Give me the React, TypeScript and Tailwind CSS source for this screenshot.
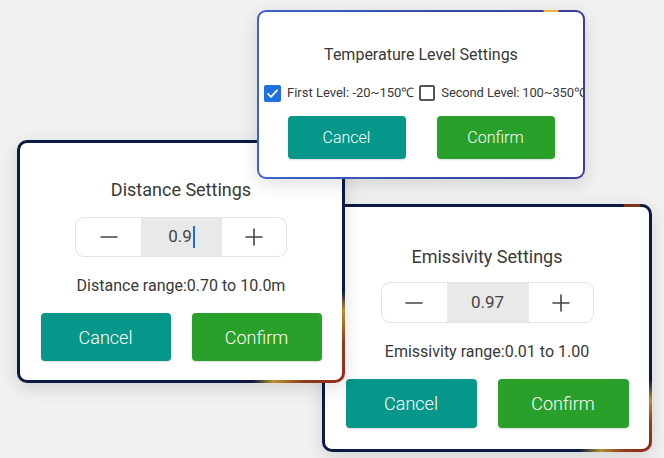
import type { ReactNode } from 'react';

const MinusIcon = () => (
    <svg width="18" height="18" viewBox="0 0 18 18" fill="none">
        <path d="M1 9h16" stroke="#444" strokeWidth="1.6" strokeLinecap="round" />
    </svg>
);

const PlusIcon = () => (
    <svg width="18" height="18" viewBox="0 0 18 18" fill="none">
        <path d="M1 9h16M9 1v16" stroke="#444" strokeWidth="1.6" strokeLinecap="round" />
    </svg>
);

const Stepper = ({ value, caret, className }: { value: string; caret?: boolean; className: string }) => (
    <div className={`flex overflow-hidden rounded-[9px] border border-[#e2e2e2] bg-white ${className}`}>
        <div className="flex w-[65px] items-center justify-center">
            <MinusIcon />
        </div>
        <div className="flex flex-1 items-center justify-center bg-[#e9e9e9] text-[17px] text-[#444]">
            {value}
            {caret && <span className="ml-[1px] h-[22px] w-[2px] bg-[#1f6fe0]" />}
        </div>
        <div className="flex w-[64px] items-center justify-center">
            <PlusIcon />
        </div>
    </div>
);

const Buttons = ({ className, btn, gap }: { className: string; btn: string; gap: string }) => (
    <div className={`flex justify-center ${gap} ${className}`}>
        <button className={`rounded-[4px] bg-[#05978a] font-light text-white shadow-[0_1px_2px_rgba(0,0,0,0.15)] ${btn}`}>
            Cancel
        </button>
        <button className={`rounded-[4px] bg-[#28a02a] font-light text-white shadow-[0_1px_2px_rgba(0,0,0,0.15)] ${btn}`}>
            Confirm
        </button>
    </div>
);

// each dialog is a window on the canvas: a gradient frame with a white body inside
const Frame = ({ className, frame, children }: { className: string; frame: string; children: ReactNode }) => (
    <div className={`absolute shadow-[0_5px_18px_rgba(0,0,0,0.13)] ${frame} ${className}`}>
        <div className="flex h-full w-full flex-col items-center overflow-hidden rounded-[7px] bg-white">{children}</div>
    </div>
);

const App = () => {
    return (
        <div className="relative h-[458px] w-[664px] overflow-hidden bg-[#f1f1f1] font-['Roboto',sans-serif] text-[#383838]">
            {/* Emissivity */}
            <Frame
                className="left-[322px] top-[204px] h-[248px] w-[330px]"
                frame="rounded-[10px] p-[3px] bg-[radial-gradient(circle_at_310px_0,#7a3418_0_8px,transparent_9px),radial-gradient(circle_at_100%_100%,#8e2418_0,#93401c_30px,#b09030_52px,#0c1a44_72px)]"
            >
                <h2 className="mt-[38px] h-[24px] text-[18px] leading-[24px]">Emissivity Settings</h2>
                <Stepper value="0.97" className="mt-[13px] h-[41px] w-[213px]" />
                <p className="mt-[19px] h-[20px] text-[16px] leading-[20px]">Emissivity range:0.01 to 1.00</p>
                <Buttons className="mt-[17px]" gap="gap-[21px]" btn="h-[49px] w-[131px] text-[18px]" />
            </Frame>

            {/* Distance */}
            <Frame
                className="left-[17px] top-[140px] h-[243px] w-[328px]"
                frame="rounded-[10px] p-[3px] bg-[radial-gradient(circle_at_100%_100%,#9a2a1a_0,#8c3a1c_40px,#b8902c_72px,#0c1a44_92px)]"
            >
                <h2 className="mt-[35px] h-[24px] text-[18px] leading-[24px]">Distance Settings</h2>
                <Stepper value="0.9" caret className="mt-[15px] h-[40px] w-[212px]" />
                <p className="mt-[19px] h-[20px] text-[16px] leading-[20px]">Distance range:0.70 to 10.0m</p>
                <Buttons className="mt-[17px]" gap="gap-[21px]" btn="h-[48px] w-[130px] text-[18px]" />
            </Frame>

            {/* Temperature level */}
            <Frame
                className="left-[257px] top-[10px] h-[169px] w-[328px]"
                frame="rounded-[9px] p-[2px] bg-[radial-gradient(circle_at_294px_0,#f0b234_0_7px,transparent_8px),linear-gradient(90deg,#3b66c8,#3549a6_60%,#3b3f98)]"
            >
                <h2 className="mt-[32px] h-[22px] text-[16px] leading-[22px]">Temperature Level Settings</h2>
                <div className="mt-[18px] flex h-[18px] w-full items-center whitespace-nowrap pl-[5px] text-[13px] text-[#383838]">
                    <span className="flex h-[17px] w-[17px] shrink-0 items-center justify-center rounded-[2px] bg-[#1f6fe0]">
                        <svg width="13" height="13" viewBox="0 0 13 13" fill="none">
                            <path d="M2 6.8l3 3L11 3.4" stroke="#fff" strokeWidth="1.8" strokeLinecap="round" strokeLinejoin="round" />
                        </svg>
                    </span>
                    <span className="ml-[6px] shrink-0">First Level: -20~150℃</span>
                    <span className="ml-[5px] h-[16px] w-[16px] shrink-0 rounded-[2px] border-2 border-[#555]" />
                    <span className="ml-[6px] shrink-0 tracking-[-0.15px]">Second Level: 100~350℃</span>
                </div>
                <Buttons className="mt-[14px]" gap="gap-[31px]" btn="h-[43px] w-[118px] text-[16px]" />
            </Frame>
        </div>
    );
};

export default App;
